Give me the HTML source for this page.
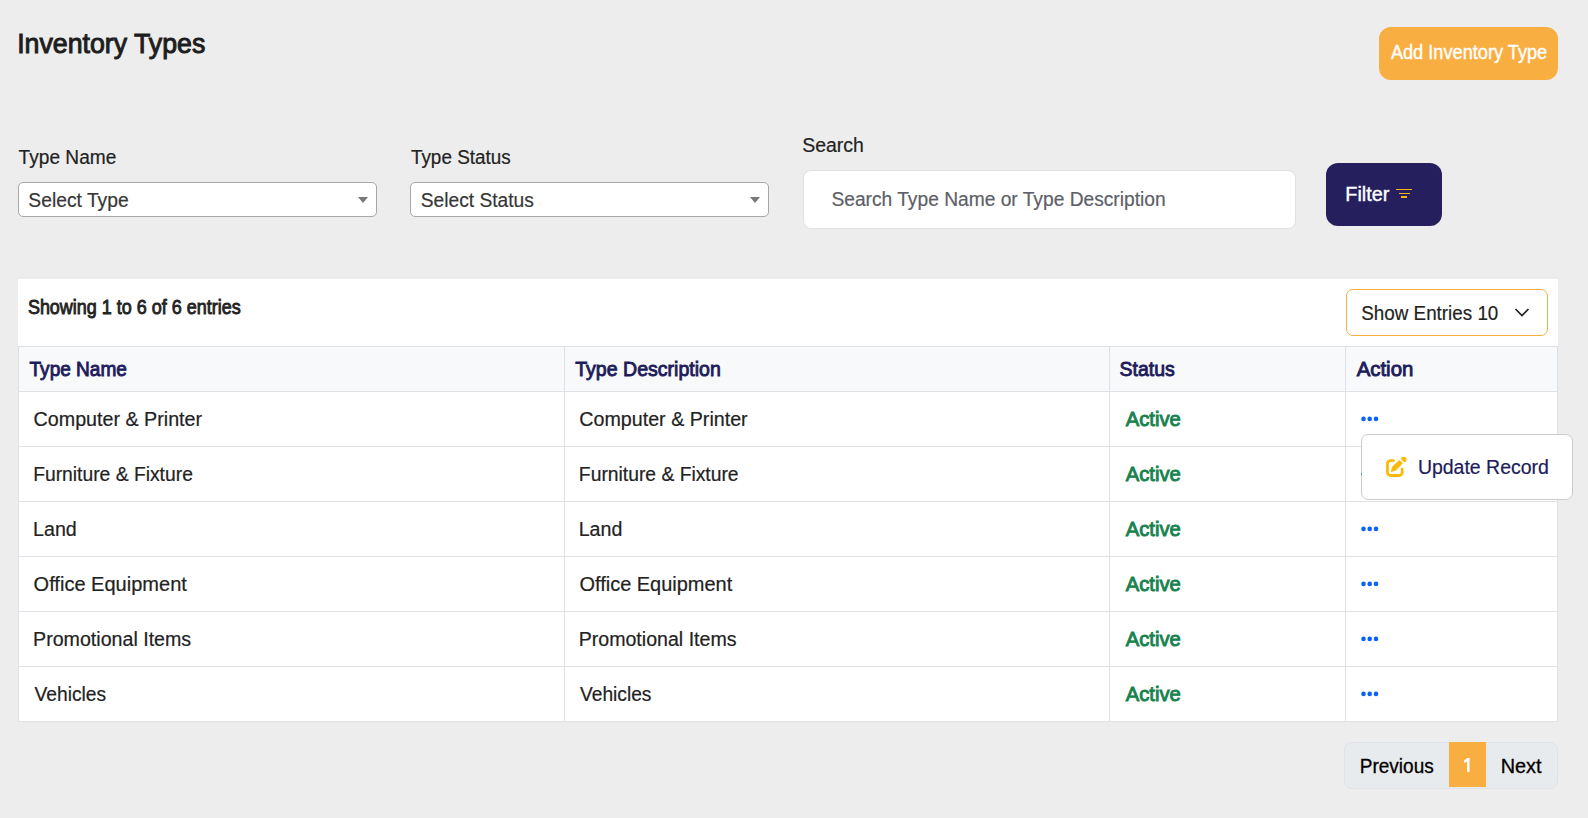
<!DOCTYPE html>
<html>
<head>
<meta charset="utf-8">
<title>Inventory Types</title>
<style>
html,body{margin:0;padding:0;}
body{width:1588px;height:818px;background:#ededed;position:relative;overflow:hidden;font-family:"Liberation Sans",sans-serif;}
.a{position:absolute;box-sizing:border-box;}
.t{position:absolute;white-space:nowrap;transform-origin:0 0;font-family:"Liberation Sans",sans-serif;}
.hl{position:absolute;height:1px;background:#dee2e6;}
.vl{position:absolute;width:1px;background:#dee2e6;}
</style>
</head>
<body>
<!-- Add button -->
<div class="a" style="left:1379px;top:27px;width:179px;height:53px;border-radius:12px;background:#f9ae42;"></div>

<!-- selects -->
<div class="a" style="left:18px;top:182px;width:359px;height:35px;border:1px solid #a8a8a8;border-radius:5px;background:#fff;"></div>
<svg class="a" style="left:357px;top:196px" width="12" height="8"><path d="M1 1 L11 1 L6 7 Z" fill="#7a7a7a"/></svg>
<div class="a" style="left:410px;top:182px;width:359px;height:35px;border:1px solid #a8a8a8;border-radius:5px;background:#fff;"></div>
<svg class="a" style="left:749px;top:196px" width="12" height="8"><path d="M1 1 L11 1 L6 7 Z" fill="#7a7a7a"/></svg>

<!-- search input -->
<div class="a" style="left:803px;top:170px;width:493px;height:59px;border:1px solid #dde1e6;border-radius:8px;background:#fff;"></div>

<!-- filter btn -->
<div class="a" style="left:1326px;top:163px;width:116px;height:63px;border-radius:12px;background:#261f5e;"></div>
<div class="a" style="left:1396.2px;top:188.8px;width:15.8px;height:1.5px;background:#f6b21a;"></div>
<div class="a" style="left:1398.9px;top:192.8px;width:10.7px;height:1.5px;background:#f6b21a;"></div>
<div class="a" style="left:1401.3px;top:196.4px;width:5.7px;height:1.5px;background:#f6b21a;"></div>

<!-- card -->
<div class="a" style="left:18px;top:279px;width:1540px;height:443px;background:#fff;"></div>
<div class="a" style="left:1346px;top:289px;width:202px;height:47px;border:1px solid #f9ae42;border-radius:7px;background:#fff;"></div>
<svg class="a" style="left:1514px;top:307px" width="16" height="11"><path d="M1.5 2 L8 8.5 L14.5 2" fill="none" stroke="#222" stroke-width="1.7"/></svg>

<!-- table -->
<div class="a" style="left:18px;top:346px;width:1540px;height:45px;background:#f8f9fa;"></div>
<div class="hl" style="left:18px;top:346px;width:1540px;"></div>
<div class="hl" style="left:18px;top:391px;width:1540px;"></div>
<div class="hl" style="left:18px;top:446px;width:1540px;"></div>
<div class="hl" style="left:18px;top:501px;width:1540px;"></div>
<div class="hl" style="left:18px;top:556px;width:1540px;"></div>
<div class="hl" style="left:18px;top:611px;width:1540px;"></div>
<div class="hl" style="left:18px;top:666px;width:1540px;"></div>
<div class="hl" style="left:18px;top:721px;width:1540px;"></div>
<div class="vl" style="left:18px;top:346px;height:376px;"></div>
<div class="vl" style="left:564px;top:346px;height:376px;"></div>
<div class="vl" style="left:1109px;top:346px;height:376px;"></div>
<div class="vl" style="left:1345px;top:346px;height:376px;"></div>
<div class="vl" style="left:1557px;top:346px;height:376px;"></div>

<!-- dots -->
<svg class="a" style="left:1361px;top:416px" width="18" height="6"><circle cx="2.5" cy="2.9" r="2.3" fill="#0b63f6"/><circle cx="8.7" cy="2.9" r="2.3" fill="#0b63f6"/><circle cx="15" cy="2.9" r="2.3" fill="#0b63f6"/></svg>
<svg class="a" style="left:1361px;top:471px" width="18" height="6"><circle cx="2.5" cy="2.9" r="2.3" fill="#0b63f6"/><circle cx="8.7" cy="2.9" r="2.3" fill="#0b63f6"/><circle cx="15" cy="2.9" r="2.3" fill="#0b63f6"/></svg>
<svg class="a" style="left:1361px;top:526px" width="18" height="6"><circle cx="2.5" cy="2.9" r="2.3" fill="#0b63f6"/><circle cx="8.7" cy="2.9" r="2.3" fill="#0b63f6"/><circle cx="15" cy="2.9" r="2.3" fill="#0b63f6"/></svg>
<svg class="a" style="left:1361px;top:581px" width="18" height="6"><circle cx="2.5" cy="2.9" r="2.3" fill="#0b63f6"/><circle cx="8.7" cy="2.9" r="2.3" fill="#0b63f6"/><circle cx="15" cy="2.9" r="2.3" fill="#0b63f6"/></svg>
<svg class="a" style="left:1361px;top:636px" width="18" height="6"><circle cx="2.5" cy="2.9" r="2.3" fill="#0b63f6"/><circle cx="8.7" cy="2.9" r="2.3" fill="#0b63f6"/><circle cx="15" cy="2.9" r="2.3" fill="#0b63f6"/></svg>
<svg class="a" style="left:1361px;top:691px" width="18" height="6"><circle cx="2.5" cy="2.9" r="2.3" fill="#0b63f6"/><circle cx="8.7" cy="2.9" r="2.3" fill="#0b63f6"/><circle cx="15" cy="2.9" r="2.3" fill="#0b63f6"/></svg>

<!-- popup -->
<div class="a" style="left:1361px;top:434px;width:212px;height:66px;border:1px solid #cbcbcb;border-radius:7px;background:#fff;"></div>
<div class="a" style="left:1361px;top:472.6px;width:1px;height:2.6px;background:#4a86ea;border-radius:0.5px;"></div>
<svg class="a" style="left:1384px;top:456px" width="24" height="22" viewBox="0 0 24 22">
<path d="M9.45 4.6 H6.45 a3 3 0 0 0 -3 3 V16.5 a3 3 0 0 0 3 3 H15.15 a3 3 0 0 0 3 -3 V13.2" fill="none" stroke="#fcba08" stroke-width="2.8" stroke-linecap="round"/>
<circle cx="19.6" cy="3.6" r="2.9" fill="#fcba08"/>
<path d="M14.6 1.8 L21.6 8.8" stroke="#fff" stroke-width="1.3"/>
<path d="M7 15.9 Q7.3 12.2 8.6 10.3 L15.43 3.88 L18.9 7.36 L12.13 14.2 Q10.3 15.6 7 15.9 Z" fill="#fcba08"/>
</svg>

<!-- pagination -->
<div class="a" style="left:1344px;top:742px;width:214px;height:47px;border:1px solid #dfe2e6;border-radius:7.5px;background:#e8ebee;"></div>
<div class="a" style="left:1449px;top:742px;width:37px;height:45px;background:#f9ae42;"></div>
<svg class="a" style="left:1460px;top:754px" width="16" height="22"><path d="M7.1 4.1 H9.5 V17.9 H7.1 Z" fill="#fff"/><path d="M3.9 6.6 L7.6 4.1 L9.5 4.1 L9.5 6.2 L4.6 8.9 Q3.6 8.4 3.9 6.6 Z" fill="#fff"/></svg>

<div class="t" style="left:0;top:29px;font-size:28.5px;line-height:28.5px;font-weight:400;color:#1d1d20;transform:translateX(17.13px) scaleX(0.9375);-webkit-text-stroke:1.0px #1d1d20;">Inventory Types</div>
<div class="t" style="left:0;top:42px;font-size:20.0px;line-height:20.0px;font-weight:400;color:#ffffff;transform:translateX(1390.88px) scaleX(0.9092);-webkit-text-stroke:0.4px #ffffff;">Add Inventory Type</div>
<div class="t" style="left:0;top:147px;font-size:20.75px;line-height:20.75px;font-weight:400;color:#222222;transform:translateX(18.62px) scaleX(0.9208);-webkit-text-stroke:0.2px #222222;">Type Name</div>
<div class="t" style="left:0;top:147px;font-size:20.75px;line-height:20.75px;font-weight:400;color:#222222;transform:translateX(410.89px) scaleX(0.9115);-webkit-text-stroke:0.2px #222222;">Type Status</div>
<div class="t" style="left:0;top:135px;font-size:20.75px;line-height:20.75px;font-weight:400;color:#222222;transform:translateX(802.22px) scaleX(0.9386);-webkit-text-stroke:0.2px #222222;">Search</div>
<div class="t" style="left:0;top:190px;font-size:20.0px;line-height:20.0px;font-weight:400;color:#363636;transform:translateX(28.33px) scaleX(0.9633);-webkit-text-stroke:0.2px #363636;">Select Type</div>
<div class="t" style="left:0;top:190px;font-size:20.0px;line-height:20.0px;font-weight:400;color:#363636;transform:translateX(420.80px) scaleX(0.9586);-webkit-text-stroke:0.2px #363636;">Select Status</div>
<div class="t" style="left:0;top:189px;font-size:20.0px;line-height:20.0px;font-weight:400;color:#5c6068;transform:translateX(831.41px) scaleX(0.9595);-webkit-text-stroke:0.2px #5c6068;">Search Type Name or Type Description</div>
<div class="t" style="left:0;top:183px;font-size:21.0px;line-height:21.0px;font-weight:400;color:#ffffff;transform:translateX(1345.31px) scaleX(0.9447);-webkit-text-stroke:0.4px #ffffff;">Filter</div>
<div class="t" style="left:0;top:296px;font-size:21.0px;line-height:21.0px;font-weight:400;color:#222222;transform:translateX(27.89px) scaleX(0.8557);-webkit-text-stroke:0.9px #222222;">Showing 1 to 6 of 6 entries</div>
<div class="t" style="left:0;top:303px;font-size:20.5px;line-height:20.5px;font-weight:400;color:#222222;transform:translateX(1361.29px) scaleX(0.9181);-webkit-text-stroke:0.2px #222222;">Show Entries 10</div>
<div class="t" style="left:0;top:358px;font-size:21.0px;line-height:21.0px;font-weight:400;color:#201b5a;transform:translateX(29.53px) scaleX(0.9069);-webkit-text-stroke:0.9px #201b5a;">Type Name</div>
<div class="t" style="left:0;top:358px;font-size:21.0px;line-height:21.0px;font-weight:400;color:#201b5a;transform:translateX(575.23px) scaleX(0.9307);-webkit-text-stroke:0.9px #201b5a;">Type Description</div>
<div class="t" style="left:0;top:358px;font-size:21.0px;line-height:21.0px;font-weight:400;color:#201b5a;transform:translateX(1119.50px) scaleX(0.9270);-webkit-text-stroke:0.9px #201b5a;">Status</div>
<div class="t" style="left:0;top:358px;font-size:21.0px;line-height:21.0px;font-weight:400;color:#201b5a;transform:translateX(1356.67px) scaleX(0.9706);-webkit-text-stroke:0.9px #201b5a;">Action</div>
<div class="t" style="left:0;top:457px;font-size:20.0px;line-height:20.0px;font-weight:400;color:#201b5a;transform:translateX(1417.88px) scaleX(0.9737);-webkit-text-stroke:0.2px #201b5a;">Update Record</div>
<div class="t" style="left:0;top:756px;font-size:20.0px;line-height:20.0px;font-weight:400;color:#000000;transform:translateX(1359.81px) scaleX(0.9498);-webkit-text-stroke:0.3px #000000;">Previous</div>
<div class="t" style="left:0;top:756px;font-size:20.0px;line-height:20.0px;font-weight:400;color:#000000;transform:translateX(1500.68px) scaleX(0.9937);-webkit-text-stroke:0.3px #000000;">Next</div>
<div class="t" style="left:0;top:409px;font-size:20.0px;line-height:20.0px;font-weight:400;color:#222222;transform:translateX(33.59px) scaleX(0.9842);-webkit-text-stroke:0.2px #222222;">Computer &amp; Printer</div>
<div class="t" style="left:0;top:409px;font-size:20.0px;line-height:20.0px;font-weight:400;color:#222222;transform:translateX(579.28px) scaleX(0.9837);-webkit-text-stroke:0.2px #222222;">Computer &amp; Printer</div>
<div class="t" style="left:0;top:408px;font-size:21.0px;line-height:21.0px;font-weight:400;color:#17824e;transform:translateX(1125.77px) scaleX(0.9625);-webkit-text-stroke:0.9px #17824e;">Active</div>
<div class="t" style="left:0;top:464px;font-size:20.0px;line-height:20.0px;font-weight:400;color:#222222;transform:translateX(33.13px) scaleX(0.9645);-webkit-text-stroke:0.2px #222222;">Furniture &amp; Fixture</div>
<div class="t" style="left:0;top:464px;font-size:20.0px;line-height:20.0px;font-weight:400;color:#222222;transform:translateX(578.87px) scaleX(0.9644);-webkit-text-stroke:0.2px #222222;">Furniture &amp; Fixture</div>
<div class="t" style="left:0;top:463px;font-size:21.0px;line-height:21.0px;font-weight:400;color:#17824e;transform:translateX(1125.77px) scaleX(0.9625);-webkit-text-stroke:0.9px #17824e;">Active</div>
<div class="t" style="left:0;top:519px;font-size:20.0px;line-height:20.0px;font-weight:400;color:#222222;transform:translateX(33.08px) scaleX(0.9812);-webkit-text-stroke:0.2px #222222;">Land</div>
<div class="t" style="left:0;top:519px;font-size:20.0px;line-height:20.0px;font-weight:400;color:#222222;transform:translateX(578.68px) scaleX(0.9801);-webkit-text-stroke:0.2px #222222;">Land</div>
<div class="t" style="left:0;top:518px;font-size:21.0px;line-height:21.0px;font-weight:400;color:#17824e;transform:translateX(1125.77px) scaleX(0.9625);-webkit-text-stroke:0.9px #17824e;">Active</div>
<div class="t" style="left:0;top:574px;font-size:20.0px;line-height:20.0px;font-weight:400;color:#222222;transform:translateX(33.58px) scaleX(1.0014);-webkit-text-stroke:0.2px #222222;">Office Equipment</div>
<div class="t" style="left:0;top:574px;font-size:20.0px;line-height:20.0px;font-weight:400;color:#222222;transform:translateX(579.45px) scaleX(0.9982);-webkit-text-stroke:0.2px #222222;">Office Equipment</div>
<div class="t" style="left:0;top:573px;font-size:21.0px;line-height:21.0px;font-weight:400;color:#17824e;transform:translateX(1125.77px) scaleX(0.9625);-webkit-text-stroke:0.9px #17824e;">Active</div>
<div class="t" style="left:0;top:629px;font-size:20.0px;line-height:20.0px;font-weight:400;color:#222222;transform:translateX(33.09px) scaleX(0.9806);-webkit-text-stroke:0.2px #222222;">Promotional Items</div>
<div class="t" style="left:0;top:629px;font-size:20.0px;line-height:20.0px;font-weight:400;color:#222222;transform:translateX(578.68px) scaleX(0.9794);-webkit-text-stroke:0.2px #222222;">Promotional Items</div>
<div class="t" style="left:0;top:628px;font-size:21.0px;line-height:21.0px;font-weight:400;color:#17824e;transform:translateX(1125.77px) scaleX(0.9625);-webkit-text-stroke:0.9px #17824e;">Active</div>
<div class="t" style="left:0;top:684px;font-size:20.0px;line-height:20.0px;font-weight:400;color:#222222;transform:translateX(34.45px) scaleX(0.9623);-webkit-text-stroke:0.2px #222222;">Vehicles</div>
<div class="t" style="left:0;top:684px;font-size:20.0px;line-height:20.0px;font-weight:400;color:#222222;transform:translateX(579.98px) scaleX(0.9594);-webkit-text-stroke:0.2px #222222;">Vehicles</div>
<div class="t" style="left:0;top:683px;font-size:21.0px;line-height:21.0px;font-weight:400;color:#17824e;transform:translateX(1125.77px) scaleX(0.9625);-webkit-text-stroke:0.9px #17824e;">Active</div>
</body>
</html>
